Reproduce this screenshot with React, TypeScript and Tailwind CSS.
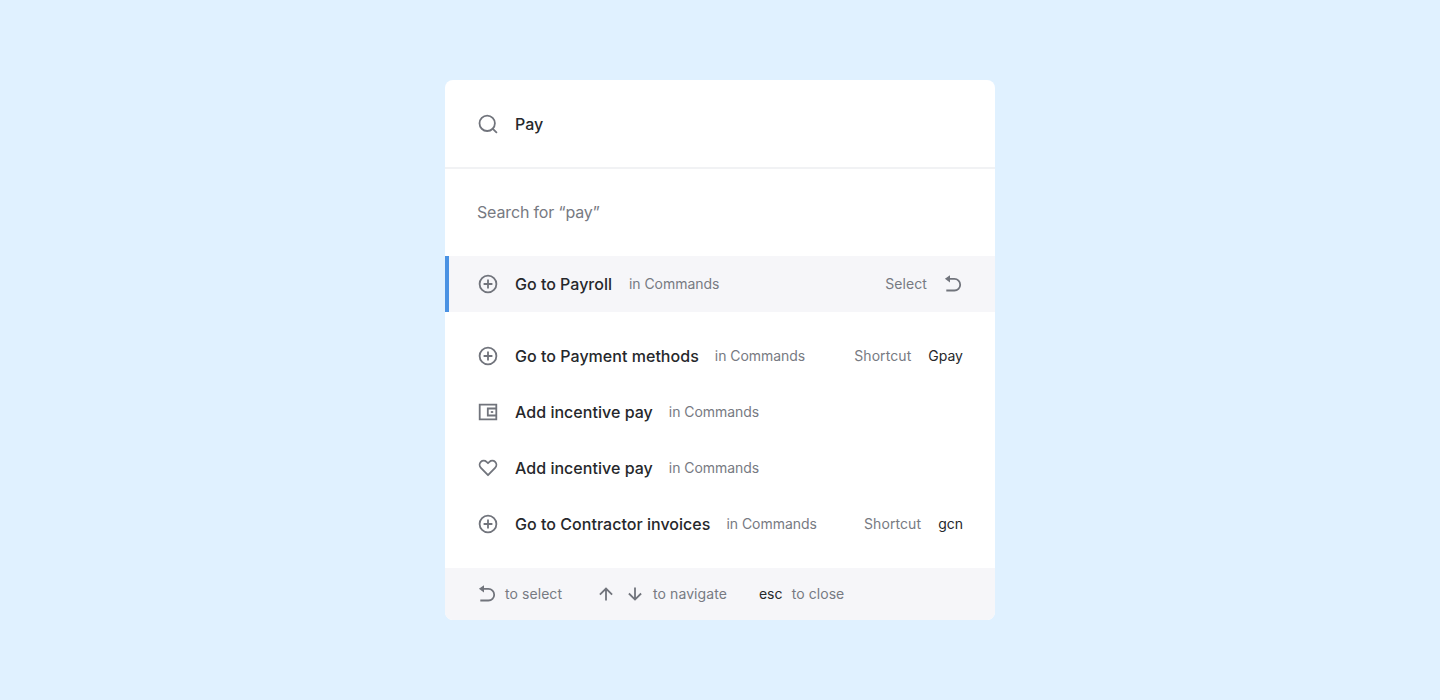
import type { ReactNode } from "react";

type IconProps = { children: ReactNode };

function Icon({ children }: IconProps) {
  return (
    <svg
      width="22"
      height="22"
      viewBox="0 0 22 22"
      fill="none"
      stroke="currentColor"
      strokeWidth="1.8"
      className="shrink-0 text-[#71747c]"
    >
      {children}
    </svg>
  );
}

const SearchIcon = () => (
  <Icon>
    <circle cx="10.2" cy="10.3" r="7.7" />
    <path d="M15.6 15.6l4.3 4.3" />
  </Icon>
);

const PlusIcon = () => (
  <Icon>
    <circle cx="11" cy="11" r="8.4" />
    <path d="M11 6.6v8.8M6.6 11h8.8" />
  </Icon>
);

const WalletIcon = () => (
  <Icon>
    <path d="M2.7 3.6h16.6v14.8H2.7z" />
    <path d="M19.2 7.5h-8.4v7h8.4" />
    <path d="M13.8 11h2.4" />
  </Icon>
);

const HeartIcon = () => (
  <Icon>
    <path
      d="M11 18.2L3.9 10.9C2.2 9.1 2.2 6.5 3.8 4.9s4.2-1.6 5.8 0L11 6.2l1.4-1.3c1.6-1.6 4.2-1.6 5.8 0s1.6 4.2-.1 6z"
      strokeLinejoin="round"
    />
  </Icon>
);

const ReturnIcon = () => (
  <Icon>
    <path d="M4 5.9h7.4a5.8 5.8 0 0 1 0 11.6H3.3" />
    <path d="M1.9 5.8l5.1-3.6v7.2z" fill="currentColor" stroke="none" />
  </Icon>
);

const ArrowUpIcon = () => (
  <Icon>
    <path d="M11 17.6V5.6M4.9 11.6L11 5.5l6.1 6.1" />
  </Icon>
);

const ArrowDownIcon = () => (
  <Icon>
    <path d="M11 4.5v12M4.9 10.5l6.1 6.1 6.1-6.1" />
  </Icon>
);

type RowProps = { icon: ReactNode; label: string; shortcut?: string };

function Row({ icon, label, shortcut }: RowProps) {
  return (
    <li className="flex h-14 items-center px-8">
      {icon}
      <span className="ml-4 font-medium tracking-[0.03px]">{label}</span>
      <span className="ml-4 text-sm tracking-[-0.04px] text-[#777a82]">in Commands</span>
      {shortcut && (
        <span className="ml-auto flex gap-[17px] text-sm">
          <span className="tracking-[0.08px] text-[#777a82]">Shortcut</span>
          <span>{shortcut}</span>
        </span>
      )}
    </li>
  );
}

export default function App() {
  return (
    <main className="flex h-[700px] w-full items-center justify-center bg-[#e0f1ff] font-['Inter',sans-serif] text-base text-[#26282b]">
      <section className="flex h-[540px] w-[550px] flex-col overflow-hidden rounded-lg bg-white">
        <header className="flex h-[89px] items-center border-b-2 border-[#f1f2f4] px-8">
          <SearchIcon />
          <span className="ml-4 font-medium">Pay</span>
        </header>
        <p className="flex h-[87px] items-center px-8 pb-0.5 tracking-[-0.15px] text-[#777a82]">
          Search for “pay”
        </p>
        <div className="flex h-14 items-center border-l-4 border-[#4a92e3] bg-[#f6f6f9] pr-[30px] pl-7">
          <PlusIcon />
          <span className="ml-4 font-medium">Go to Payroll</span>
          <span className="ml-[17px] text-sm tracking-[-0.04px] text-[#777a82]">in Commands</span>
          <span className="mr-4 ml-auto text-sm tracking-[0.08px] text-[#777a82]">Select</span>
          <ReturnIcon />
        </div>
        <ul className="py-4">
          <Row icon={<PlusIcon />} label="Go to Payment methods" shortcut="Gpay" />
          <Row icon={<WalletIcon />} label="Add incentive pay" />
          <Row icon={<HeartIcon />} label="Add incentive pay" />
          <Row icon={<PlusIcon />} label="Go to Contractor invoices" shortcut="gcn" />
        </ul>
        <footer className="flex h-[52px] items-center bg-[#f6f6f9] px-8 text-sm tracking-[0.07px] text-[#777a82]">
          <ReturnIcon />
          <span className="ml-1.5">to select</span>
          <span className="ml-[33px] flex gap-[7px]">
            <ArrowUpIcon />
            <ArrowDownIcon />
          </span>
          <span className="ml-[7px]">to navigate</span>
          <span className="ml-8 text-[#26282b]">esc</span>
          <span className="ml-[9px]">to close</span>
        </footer>
      </section>
    </main>
  );
}
